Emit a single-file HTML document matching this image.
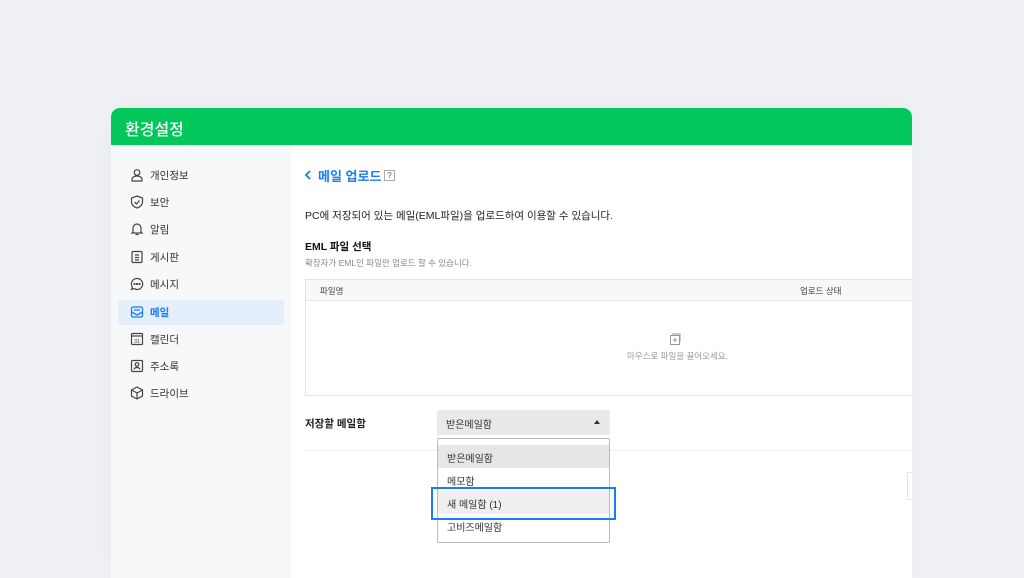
<!DOCTYPE html>
<html><head><meta charset="utf-8"><style>
*{margin:0;padding:0;box-sizing:border-box}
body{width:1024px;height:572px;overflow:hidden;background:#f0f1f6;font-family:"Liberation Sans","Noto Sans CJK KR",sans-serif;position:relative}
.win{position:absolute;left:111px;top:108px;width:801px;height:470px;background:#fff;border-radius:9px 9px 0 0;overflow:hidden;box-shadow:0 0 30px rgba(0,0,0,0.04)}
.hd{height:37px;background:#03c75a;color:#fff;font-size:16px;font-weight:500;padding:8px 0 0 14px}
.side{position:absolute;left:0;top:37px;width:180px;bottom:0;background:#f7f8fa}
.it{position:absolute;left:7px;width:166px;height:25px;font-size:10.5px;color:#333;padding:5px 0 0 32px}
.it svg{position:absolute;left:12px;top:5px}
.it.on{background:#e5eefb;color:#1a7cf0;border-radius:3px;font-weight:bold}
.t{position:absolute;white-space:nowrap}
</style></head><body>
<div class="win">
<div class="hd">환경설정</div>
<div class="side">
<div class="it" style="top:18px"><svg width="14" height="14" viewBox="0 0 14 14" fill="none" stroke="#444" stroke-width="1.2"><circle cx="7" cy="4.5" r="2.8"/><path d="M2 13v-1.5c0-2 2-3.5 5-3.5s5 1.5 5 3.5V13z"/></svg>개인정보</div>
<div class="it" style="top:45px"><svg width="14" height="14" viewBox="0 0 14 14" fill="none" stroke="#444" stroke-width="1.2"><path d="M7 1l5.5 2v4c0 3-2.5 5-5.5 6-3-1-5.5-3-5.5-6V3z"/><path d="M4.5 7l2 2 3-3.5"/></svg>보안</div>
<div class="it" style="top:72px"><svg width="14" height="14" viewBox="0 0 14 14" fill="none" stroke="#444" stroke-width="1.2"><path d="M3 10V6a4 4 0 0 1 8 0v4l1 1H2z"/><path d="M5.5 12.5h3"/></svg>알림</div>
<div class="it" style="top:100px"><svg width="14" height="14" viewBox="0 0 14 14" fill="none" stroke="#444" stroke-width="1.2"><rect x="2" y="1.5" width="10" height="11" rx="1"/><path d="M5 5h4M5 7.5h4M5 10h4"/></svg>게시판</div>
<div class="it" style="top:127px"><svg width="14" height="14" viewBox="0 0 14 14" fill="none" stroke="#444" stroke-width="1.2"><path d="M7 1.5a5.5 5.5 0 1 1-3 10l-2.5 1 .8-2.5A5.5 5.5 0 0 1 7 1.5z"/><circle cx="4.5" cy="7" r=".5"/><circle cx="7" cy="7" r=".5"/><circle cx="9.5" cy="7" r=".5"/></svg>메시지</div>
<div class="it on" style="top:155px"><svg width="14" height="14" viewBox="0 0 14 14" fill="none" stroke="#1a7cf0" stroke-width="1.3"><rect x="1.5" y="2" width="11" height="10" rx="1.5"/><path d="M1.5 7l5.5 3 5.5-3M4 5h6"/></svg>메일</div>
<div class="it" style="top:182px"><svg width="14" height="14" viewBox="0 0 14 14" fill="none" stroke="#444" stroke-width="1.2"><rect x="1.5" y="1.5" width="11" height="11" rx="1"/><path d="M1.5 4h11"/><text x="7" y="11" font-size="5.5" text-anchor="middle" fill="#444" stroke="none" font-family="Liberation Sans">31</text></svg>캘린더</div>
<div class="it" style="top:209px"><svg width="14" height="14" viewBox="0 0 14 14" fill="none" stroke="#444" stroke-width="1.2"><rect x="1.5" y="1.5" width="11" height="11" rx="1"/><circle cx="7" cy="5.5" r="1.8"/><path d="M4 10.5c.5-1.5 1.5-2 3-2s2.5.5 3 2"/></svg>주소록</div>
<div class="it" style="top:236px"><svg width="14" height="14" viewBox="0 0 14 14" fill="none" stroke="#444" stroke-width="1.2"><path d="M7 1l5.5 3v6L7 13 1.5 10V4zM1.5 4L7 7l5.5-3M7 7v6"/></svg>드라이브</div>
</div>
</div>
<svg class="t" style="left:304px;top:169px" width="8" height="12" viewBox="0 0 8 12" fill="none" stroke="#1a7cf0" stroke-width="1.8"><path d="M6 2L2 6l4 4"/></svg>
<div class="t" style="left:318px;top:166px;font-size:13px;font-weight:bold;color:#1a7cf0">메일 업로드</div>
<div class="t" style="left:384px;top:170px;width:11px;height:11px;border:1px solid #aaa;font-size:8px;color:#555;text-align:center;line-height:9px">?</div>
<div class="t" style="left:305px;top:208px;font-size:10.5px;color:#222">PC에 저장되어 있는 메일(EML파일)을 업로드하여 이용할 수 있습니다.</div>
<div class="t" style="left:305px;top:239px;font-size:10.5px;font-weight:bold;color:#111">EML 파일 선택</div>
<div class="t" style="left:305px;top:257px;font-size:8.5px;color:#888">확장자가 EML인 파일만 업로드 할 수 있습니다.</div>
<div class="t" style="left:305px;top:279px;width:607px;height:117px;border:1px solid #e4e4e4;border-right:none"></div>
<div class="t" style="left:306px;top:280px;width:606px;height:21px;background:#f8f8f8;border-bottom:1px solid #e8e8e8"></div>
<div class="t" style="left:320px;top:285px;font-size:8.5px;color:#444">파일명</div>
<div class="t" style="left:800px;top:285px;font-size:8.5px;color:#444">업로드 상태</div>
<svg class="t" style="left:669px;top:333px" width="12" height="13" viewBox="0 0 12 13" fill="none" stroke="#999" stroke-width="1"><rect x="1.5" y="2.5" width="9" height="9"/><path d="M3 1h8v8M6 5v4M4 7h4"/></svg>
<div class="t" style="left:627px;top:350px;font-size:8.5px;color:#999">마우스로 파일을 끌어오세요.</div>
<div class="t" style="left:305px;top:416px;font-size:10.5px;font-weight:bold;color:#222">저장할 메일함</div>
<div class="t" style="left:437px;top:410px;width:173px;height:25px;background:#e9e9e9;border-radius:2px;font-size:10px;color:#333;padding:6px 0 0 9px">받은메일함</div>
<div class="t" style="left:594px;top:420px;width:0;height:0;border-left:3px solid transparent;border-right:3px solid transparent;border-bottom:4px solid #333"></div>
<div class="t" style="left:305px;top:450px;width:607px;height:1px;background:#eee"></div>
<div class="t" style="left:437px;top:438px;width:173px;height:105px;background:#fff;border:1px solid #bbb;border-radius:2px"></div>
<div class="t" style="left:438px;top:445px;width:171px;height:23px;background:#e6e6e6;font-size:10px;color:#333;padding:5px 0 0 9px">받은메일함</div>
<div class="t" style="left:447px;top:473px;font-size:10px;color:#333">메모함</div>
<div class="t" style="left:438px;top:491px;width:171px;height:23px;background:#efefef;font-size:10px;color:#333;padding:5px 0 0 9px">새 메일함 (1)</div>
<div class="t" style="left:447px;top:519px;font-size:10px;color:#333">고비즈메일함</div>
<div class="t" style="left:431px;top:487px;width:185px;height:33px;border:2px solid #1a7cf0"></div>
<div class="t" style="left:907px;top:472px;width:5px;height:28px;border:1px solid #e4e4e4;border-right:none;border-radius:2px 0 0 2px"></div>
</body></html>
